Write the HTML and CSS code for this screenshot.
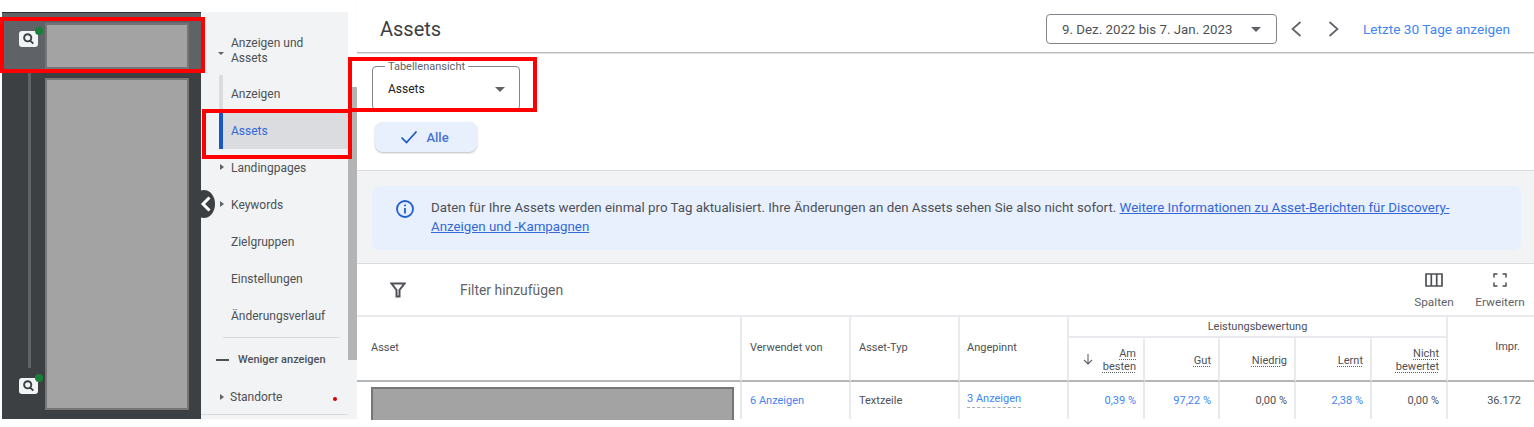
FILE: index.html
```html
<!DOCTYPE html>
<html lang="de">
<head>
<meta charset="utf-8">
<title>Assets</title>
<link rel="stylesheet" href="styles.css">
</head>
<body>
<div class="page">
  <aside class="rail">
    <div class="rail-head">
      <div class="rail-icon"><span class="lens"><svg viewBox="0 0 19 16" width="19" height="16"><path d="M8.700 3.200a3.600 3.600 0 1 0 0 7.200 3.600 3.600 0 0 0 0-7.200zM11.300 9.700l3 3" fill="none" stroke="#3c4043" stroke-width="1.900"/></svg></span><span class="dot"></span></div>
      <div class="redacted head-block"></div>
    </div>
    <div class="rail-body">
      <div class="rail-track">
        <div class="track-line"></div>
        <div class="rail-icon low"><span class="lens"><svg viewBox="0 0 19 16" width="19" height="16"><path d="M8.700 3.200a3.600 3.600 0 1 0 0 7.200 3.600 3.600 0 0 0 0-7.200zM11.300 9.700l3 3" fill="none" stroke="#3c4043" stroke-width="1.900"/></svg></span><span class="dot"></span></div>
      </div>
      <div class="redacted body-block"></div>
    </div>
  </aside>

  <nav class="nav">
    <div class="nav-list">
      <div class="nav-item parent"><span class="caret down"></span><span>Anzeigen und<br>Assets</span></div>
      <div class="sub">
        <div class="nav-item sub-item">Anzeigen</div>
        <div class="nav-item sub-item active">Assets</div>
      </div>
      <div class="nav-item"><span class="caret right"></span>Landingpages</div>
      <div class="nav-item"><span class="caret right"></span>Keywords</div>
      <div class="nav-item">Zielgruppen</div>
      <div class="nav-item">Einstellungen</div>
      <div class="nav-item">Änderungsverlauf</div>
      <div class="nav-rule"></div>
      <div class="nav-less"><span class="dash"></span>Weniger anzeigen</div>
      <div class="nav-item places"><span class="caret right"></span>Standorte<span class="red-dot"></span></div>
      <div class="nav-rule wide"></div>
    </div>
    <div class="scroll"><div class="scroll-thumb"></div></div>
  </nav>

  <main class="main">
    <header class="topbar">
      <h1 class="title">Assets</h1>
      <div class="range">
        <div class="date-box"><span>9. Dez. 2022 bis 7. Jan. 2023</span><span class="tri"></span></div>
        <svg class="chev" width="14" height="18" viewBox="0 0 14 18"><path d="M11.500 2 3.500 9l8 7" fill="none" stroke="#5f6368" stroke-width="1.700"/></svg>
        <svg class="chev next" width="14" height="18" viewBox="0 0 14 18"><path d="M2.500 2l8 7-8 7" fill="none" stroke="#5f6368" stroke-width="1.700"/></svg>
        <a class="last30">Letzte 30 Tage anzeigen</a>
      </div>
    </header>

    <section class="view">
      <div class="select">
        <span class="select-label">Tabellenansicht</span>
        <span class="select-value">Assets</span>
        <span class="tri"></span>
      </div>
      <div class="chip">
        <svg width="18" height="14" viewBox="0 0 18 14"><path d="M1.500 7.500 6.500 12.500 16.500 1.500" fill="none" stroke="#1a56c4" stroke-width="1.700"/></svg>
        <span>Alle</span>
      </div>
    </section>

    <section class="band">
      <div class="notice">
        <svg class="info" width="20" height="20" viewBox="0 0 20 20"><circle cx="10" cy="10" r="8" fill="none" stroke="#1f5fd0" stroke-width="1.800"/><path d="M10 9v5.500M10 5.400v1.800" stroke="#1f5fd0" stroke-width="1.800" fill="none"/></svg>
        <p>Daten für Ihre Assets werden einmal pro Tag aktualisiert. Ihre Änderungen an den Assets sehen Sie also nicht sofort. <a>Weitere Informationen zu Asset-Berichten für Discovery-Anzeigen und -Kampagnen</a></p>
      </div>
    </section>

    <section class="toolbar">
      <svg class="funnel" width="16" height="16" viewBox="0 0 16 16"><path d="M1.500 1.500h13L9.500 8v6.500h-3V8z" fill="none" stroke="#4d5156" stroke-width="2"/></svg>
      <span class="add-filter">Filter hinzufügen</span>
      <div class="tool tool-cols">
        <svg width="18" height="14" viewBox="0 0 18 14"><path d="M1 1h16v12H1zM6.300 1v12M11.700 1v12" fill="none" stroke="#4d5156" stroke-width="1.700"/></svg>
        <span>Spalten</span>
      </div>
      <div class="tool">
        <svg width="14" height="14" viewBox="0 0 14 14"><path d="M1 4.500V1h3.500M9.500 1H13v3.500M13 9.500V13H9.500M4.500 13H1V9.500" fill="none" stroke="#4d5156" stroke-width="1.500"/></svg>
        <span>Erweitern</span>
      </div>
    </section>

    <section class="table">
      <div class="th span-rows">Asset</div>
      <div class="th span-rows">Verwendet von</div>
      <div class="th span-rows">Asset-Typ</div>
      <div class="th span-rows pinned">Angepinnt</div>
      <div class="th group">Leistungsbewertung</div>
      <div class="th span-rows impr">Impr.</div>

      <div class="th metric first"><svg class="sort" width="12" height="12" viewBox="0 0 12 12"><path d="M6 1v10M2 7l4 4 4-4" fill="none" stroke="#5f6368" stroke-width="1.100"/></svg><span class="dotted">Am<br>besten</span></div>
      <div class="th metric"><span class="dotted">Gut</span></div>
      <div class="th metric"><span class="dotted">Niedrig</span></div>
      <div class="th metric"><span class="dotted">Lernt</span></div>
      <div class="th metric"><span class="dotted">Nicht<br>bewertet</span></div>

      <div class="td asset"><div class="asset-block"></div></div>
      <div class="td link">6 Anzeigen</div>
      <div class="td">Textzeile</div>
      <div class="td link pinned"><span class="dashed">3 Anzeigen</span></div>
      <div class="td num link">0,39 %</div>
      <div class="td num link">97,22 %</div>
      <div class="td num">0,00 %</div>
      <div class="td num link">2,38 %</div>
      <div class="td num">0,00 %</div>
      <div class="td num last">36.172</div>
    </section>
  </main>

  <button class="collapse" aria-label="Einklappen"><svg width="12" height="18" viewBox="0 0 12 18"><path d="M9.500 2.500 3 9l6.500 6.500" fill="none" stroke="#fff" stroke-width="3"/></svg></button>
  <div class="mark mark-a"></div>
  <div class="mark mark-b"></div>
  <div class="mark mark-c"></div>
</div>
</body>
</html>
```
FILE: styles.css
```css
* { box-sizing: border-box; }
html, body { margin: 0; padding: 0; background: #fff; }
body { font-family: Roboto, "Liberation Sans", sans-serif; color: #3c4043; }
.page { position: relative; width: 1534px; height: 427px; overflow: hidden; display: flex; align-items: flex-start; }

/* dark rail */
.rail { flex: none; width: 199px; height: 407px; margin: 12px 0 0 2px; background: #3c4043; border-top: 1px solid #2f3133; }
.rail-head { height: 57px; padding: 10px 12px 0 17px; display: flex; background: #5f6368; }
.rail-icon { position: relative; width: 26px; flex: none; margin-top: 8px; }
.lens { display: flex; width: 19px; height: 16px; background: #f1f3f4; border-radius: 3px; }
.dot { position: absolute; left: 16px; top: -4px; width: 8px; height: 8px; border-radius: 50%; background: #188038; }
.redacted { background: #a3a3a3; border: 2px solid #757575; }
.head-block { width: 144px; height: 46px; }
.rail-body { display: flex; padding: 8px 12px 0 17px; height: 349px; }
.rail-track { width: 26px; flex: none; display: flex; flex-direction: column; }
.track-line { width: 3px; height: 298px; margin: -8px 0 0 9px; background: #5f6368; }
.rail-icon.low { margin-top: 10px; }
.body-block { width: 144px; height: 332px; }

/* side nav */
.nav { flex: none; width: 156px; height: 407px; margin-top: 12px; display: flex; background: #f1f3f4; }
.nav-list { flex: none; width: 147px; padding: 7px 0 0 0; font-size: 12px; color: #4d5156; }
.nav-item { position: relative; height: 37px; padding: 2px 0 0 30px; display: flex; align-items: center; line-height: 15px; }
.nav-item.parent { height: 63px; padding-top: 0; margin-bottom: -7px; }
.caret { position: absolute; left: 19px; top: 50%; width: 0; height: 0; }
.caret.right { margin-top: -4px; border-left: 4px solid #5f6368; border-top: 3.500px solid transparent; border-bottom: 3.500px solid transparent; }
.caret.down { left: 17px; margin-top: 1px; border-top: 3.500px solid #5f6368; border-left: 3.500px solid transparent; border-right: 3.500px solid transparent; }
.sub { margin-left: 18px; border-left: 4px solid #dadce0; }
.sub-item { padding-left: 8px; }
.sub-item.active { margin-left: -4px; padding-left: 8px; background: #dadce0; border-left: 4px solid #1a56c4; color: #3367d6; }
.nav-rule { height: 1px; margin: 3px 8px 0 22px; background: #dadce0; }
.nav-rule.wide { margin: -2px 0 0; }
.nav-less { height: 41px; padding-top: 2px; display: flex; align-items: center; font-size: 11px; font-weight: 500; color: #4d5156; }
.dash { width: 13px; height: 2px; margin: 0 9px 0 15px; background: #4d5156; }
.nav-item.places { padding: 0 0 0 29px; }
.red-dot { position: absolute; left: 132px; top: 18px; width: 4px; height: 4px; border-radius: 50%; background: #d50000; }
.scroll { flex: none; width: 9px; height: 348px; padding-top: 75px; background: #fff; }
.scroll-thumb { height: 273px; background: #b4b4b4; }

/* main */
.main { flex: 1; min-width: 0; display: flex; flex-direction: column; }
.topbar { height: 53px; display: flex; align-items: center; justify-content: space-between; padding: 6px 24px 0 23px; border-bottom: 1px solid #b8babc; box-shadow: 0 1px 1px #e4e4e4; }
.title { margin: 0; font-size: 20px; font-weight: 400; color: #3c4043; }
.range { display: flex; align-items: center; font-size: 13.650px; }
.date-box { width: 231px; height: 30px; padding: 0 15px; display: flex; align-items: center; justify-content: space-between; border: 1px solid #80868b; border-radius: 4px; color: #4d5156; font-size: 13.300px; }
.tri { width: 0; height: 0; border-top: 5px solid #5f6368; border-left: 5px solid transparent; border-right: 5px solid transparent; }
.chev { margin-left: 12px; }
.chev.next { margin-left: 24px; }
.last30 { margin-left: 22px; color: #4285f4; }

.view { height: 117px; padding: 13px 0 0 15px; }
.select { position: relative; width: 148px; height: 44px; padding: 2px 14px 0 15px; display: flex; align-items: center; justify-content: space-between; border: 1px solid #80868b; border-radius: 4px; font-size: 12px; color: #202124; }
.select-label { position: absolute; left: 12px; top: -6px; padding: 0 3px; background: #fff; font-size: 11px; line-height: 11px; color: #5f6368; }
.chip { width: 102px; height: 30px; margin: 12px 0 0 3px; padding-right: 3px; display: flex; align-items: center; justify-content: center; gap: 8px; background: #e8f0fe; border-radius: 8px; box-shadow: 0 1px 2px rgba(60,64,67,.35); font-size: 13px; font-weight: 500; color: #4a72d4; }

.band { height: 94px; padding: 15px 13px 0 15px; background: #f1f3f4; border-top: 1px solid #dadce0; border-bottom: 1px solid #dadce0; }
.notice { height: 64px; padding: 12px 24px 0 23px; display: flex; gap: 16px; background: #e8f0fe; border-radius: 8px; font-size: 13.300px; }
.info { flex: none; margin-top: 1px; }
.notice p { margin: 1px 0 0; line-height: 18.500px; color: #4d5156; }
.notice a { color: #3367d6; text-decoration: underline; }

.toolbar { height: 53px; padding: 0 9px 0 33px; display: flex; align-items: center; font-size: 11.800px; color: #5f6368; border-bottom: 2px solid #e8eaed; }
.funnel { margin-right: 54px; }
.add-filter { flex: 1; font-size: 13.900px; color: #5f6368; }
.tool { display: flex; flex-direction: column; align-items: center; gap: 8px; width: 50px; padding-top: 2px; }
.tool-cols { margin-right: 16px; }

.table { display: grid; grid-template-columns: 385px 109px 109px 109px 76px 75px 76px 76px 76px 86px; grid-template-rows: 21px 44px 37px; font-size: 11px; color: #4d5156; }
.th { display: flex; align-items: center; border-right: 2px solid #e8eaed; padding: 0 8px; background: #fff; }
.span-rows { grid-row: span 2; border-bottom: 2px solid #b4b6b8; padding-bottom: 3px; }
.th:first-child { padding-left: 14px; }
.th.pinned, .td.pinned { padding-left: 7px; }
.group { grid-column: span 5; justify-content: center; border-bottom: 2px solid #e8eaed; }
.impr { border-right: 0; justify-content: flex-end; padding-right: 14px; padding-bottom: 5px; }
.metric { position: relative; justify-content: flex-end; text-align: right; line-height: 13px; padding-right: 7px; padding-top: 2px; border-bottom: 2px solid #b4b6b8; }
.dotted { border-bottom: 0; text-decoration: underline dotted #5f6368; text-underline-offset: 2px; }
.sort { position: absolute; left: 13px; top: 15px; }
.td { display: flex; align-items: center; padding: 0 7px 1px 8px; border-right: 2px solid #e8eaed; font-size: 11px; }
.td.last { border-right: 0; padding-right: 13px; }
.td.link { color: #4285f4; }
.td.num { justify-content: flex-end; }
.asset { padding: 5px 6px 0 14px; }
.asset-block { width: 365px; height: 33px; background: #a3a3a3; border: 2px solid #757575; border-bottom: 0; }
.dashed { padding-bottom: 2px; border-bottom: 1px dashed #a8abb0; }

/* overlays */
.collapse { position: absolute; left: 193px; top: 190px; width: 22px; height: 28px; padding: 0 0 0 3px; display: flex; align-items: center; justify-content: center; border: 0; border-radius: 50%; background: #3c4043; }
.mark { position: absolute; border: 4px solid #fe0000; pointer-events: none; }
.mark-a { left: 0; top: 17px; width: 205px; height: 56px; }
.mark-b { left: 202px; top: 109px; width: 150px; height: 50px; }
.mark-c { left: 348px; top: 57px; width: 189px; height: 55px; }
```
